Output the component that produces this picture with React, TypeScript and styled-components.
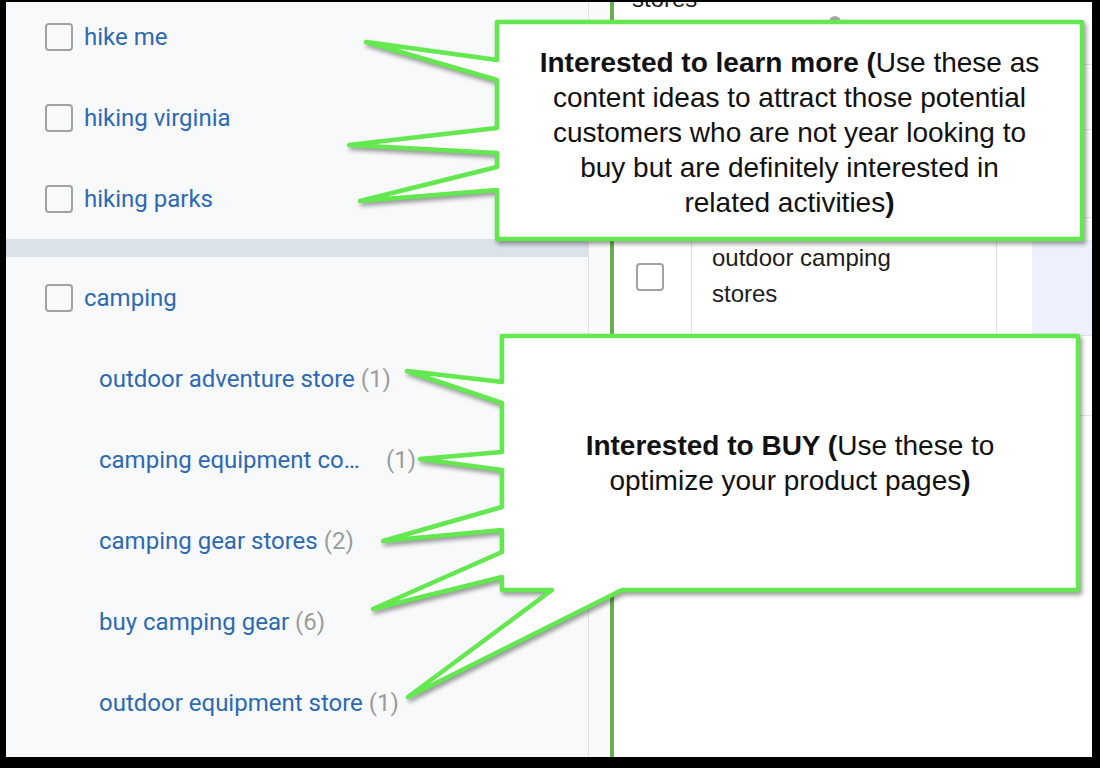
import React from "react";
import styled, { createGlobalStyle } from "styled-components";

const GlobalStyle = createGlobalStyle`
  html, body { margin: 0; padding: 0; background: #000; }
  body { width: 1100px; height: 768px; overflow: hidden; }
`;

const Frame = styled.div`
  position: relative;
  width: 1100px;
  height: 768px;
  box-sizing: border-box;
  padding: 2px 8px 11px 6px;
  background: #000;
  display: flex;
`;

const Screen = styled.div`
  flex: 1;
  display: flex;
  overflow: hidden;
  background: #fff;
`;

/* ---------- left filter panel ---------- */
const LeftPanel = styled.div`
  width: 582px;
  flex: none;
  background: #f8f9fa;
  border-right: 1px solid #dfe1e4;
  overflow: hidden;
  font-family: Roboto, "Noto Sans", sans-serif;
`;

const Group = styled.div<{ $shift?: number }>`
  margin-top: ${(p) => p.$shift ?? 0}px;
`;

const ItemRow = styled.div<{ $indent?: boolean }>`
  height: 81px;
  display: flex;
  align-items: center;
  gap: 11px;
  padding-left: ${(p) => (p.$indent ? 93 : 39)}px;
  font-size: 24px;
  color: #2c69b2;
  white-space: nowrap;
`;

const Check = styled.span`
  display: block;
  flex: none;
  width: 28px;
  height: 28px;
  box-sizing: border-box;
  border: 2px solid #a2a2a2;
  border-radius: 4px;
  background: transparent;
`;

const Name = styled.span<{ $fixed?: number }>`
  display: inline-block;
  ${(p) => (p.$fixed ? `width: ${p.$fixed}px;` : "")}
`;

const Count = styled.span`
  color: #9c9c9c;
`;

const Divider = styled.div`
  height: 18px;
  background: #dce2ea;
`;

/* ---------- right table ---------- */
const RightPane = styled.div`
  flex: 1;
  display: flex;
  background: #fff;
  font-family: "Liberation Sans", Arial, sans-serif;
  color: #1c1c1c;
`;

const Gutter = styled.div`
  width: 21px;
  flex: none;
  background: #fafafa;
`;

const Rail = styled.div`
  width: 4px;
  flex: none;
  background: #6aae52;
`;

const Table = styled.div`
  flex: 1;
  display: flex;
  flex-direction: column;
`;

const TopRow = styled.div`
  height: 238px;
  flex: none;
  display: grid;
  grid-template-columns: 418px 60px;
`;

const TopLead = styled.div`
  display: flex;
  align-items: flex-start;
  padding-left: 18px;
  font-size: 24px;
`;

const CutText = styled.span`
  margin-top: -17px;
`;

const Dot = styled.span`
  width: 12px;
  height: 12px;
  border-radius: 50%;
  background: #a5a5a5;
  margin: 14px 0 0 132px;
`;

const SideStack = styled.div`
  display: flex;
  flex-direction: column;
`;

const SideMark = styled.div<{ $h: number; $line?: boolean }>`
  height: ${(p) => p.$h}px;
  box-sizing: border-box;
  border-bottom: ${(p) => (p.$line ? "1px solid #e3e3e3" : "none")};
`;

const DataRow = styled.div<{ $h: number }>`
  height: ${(p) => p.$h}px;
  flex: none;
  display: flex;
  box-sizing: border-box;
  border-bottom: 1px solid #e3e3e3;
`;

const CheckCell = styled.div`
  width: 78px;
  box-sizing: border-box;
  border-right: 1px solid #e2e2e2;
  padding: 23px 0 0 22px;
`;

const KeywordCell = styled.div`
  width: 305px;
  box-sizing: border-box;
  border-right: 1px solid #e2e2e2;
  padding-left: 20px;
  font-size: 24px;
  line-height: 36px;
`;

const KeywordText = styled.div`
  max-width: 220px;
`;

const Cell = styled.div<{ $w: number; $tint?: boolean }>`
  width: ${(p) => p.$w}px;
  background: ${(p) => (p.$tint ? "#eef1fb" : "transparent")};
`;

/* ---------- callouts ---------- */
const Overlay = styled.svg`
  position: absolute;
  left: 0;
  top: 0;
  width: 1100px;
  height: 768px;
  pointer-events: none;
  overflow: visible;
`;

const CalloutShape = styled.polygon`
  fill: #fff;
  stroke: #63e84f;
  stroke-width: 4.5;
  stroke-linejoin: round;
  filter: drop-shadow(2px 3px 2px rgba(0, 0, 0, 0.38));
`;

const CalloutText = styled.div<{ $x: number; $y: number; $w: number; $h: number; $pad?: number }>`
  position: absolute;
  left: ${(p) => p.$x}px;
  top: ${(p) => p.$y}px;
  width: ${(p) => p.$w}px;
  height: ${(p) => p.$h}px;
  box-sizing: border-box;
  padding-top: ${(p) => p.$pad ?? 0}px;
  display: flex;
  align-items: center;
  justify-content: center;
  text-align: center;
  font-family: "Liberation Sans", Arial, sans-serif;
  font-size: 28px;
  line-height: 35px;
  color: #111;
  white-space: nowrap;
`;

const B = styled.b`
  font-weight: 700;
`;

const hiking = ["hike me", "hiking virginia", "hiking parks"];

const camping: { name: string; count: number; fixed?: number }[] = [
  { name: "outdoor adventure store", count: 1 },
  { name: "camping equipment co…", count: 1, fixed: 281 },
  { name: "camping gear stores", count: 2 },
  { name: "buy camping gear", count: 6 },
  { name: "outdoor equipment store", count: 1 },
];

const learnPts =
  "497,22 1082,22 1082,239 497,239 497,190 360,201 497,167 497,153 349,145 497,128 497,80 366,42 497,60";
const buyPts =
  "502,336 1078,336 1078,590 622,590 408,697 552,590 502,590 502,577 373,609 502,552 502,530 383,541 502,507 502,470 420,459 502,452 502,403 407,371 502,382";

export default function App() {
  return (
    <>
      <GlobalStyle />
      <Frame>
        <Screen>
          <LeftPanel>
            <Group $shift={-6}>
              {hiking.map((h) => (
                <ItemRow key={h}>
                  <Check />
                  <Name>{h}</Name>
                </ItemRow>
              ))}
            </Group>
            <Divider />
            <Group>
              <ItemRow>
                <Check />
                <Name>camping</Name>
              </ItemRow>
              {camping.map((c) => (
                <ItemRow $indent key={c.name}>
                  <span>
                    <Name $fixed={c.fixed}>{c.name}</Name> <Count>({c.count})</Count>
                  </span>
                </ItemRow>
              ))}
            </Group>
          </LeftPanel>
          <RightPane>
            <Gutter />
            <Rail />
            <Table>
              <TopRow>
                <TopLead>
                  <CutText>stores</CutText>
                  <Dot />
                </TopLead>
                <SideStack>
                  <SideMark $h={63} $line />
                  <SideMark $h={65} $line />
                  <SideMark $h={88} $line />
                  <SideMark $h={22} />
                </SideStack>
              </TopRow>
              <DataRow $h={96}>
                <CheckCell>
                  <Check />
                </CheckCell>
                <KeywordCell>
                  <KeywordText>outdoor camping stores</KeywordText>
                </KeywordCell>
                <Cell $w={35} />
                <Cell $w={60} $tint />
              </DataRow>
              <DataRow $h={80} />
            </Table>
          </RightPane>
        </Screen>

        <Overlay viewBox="0 0 1100 768">
          <CalloutShape points={learnPts} />
          <CalloutShape points={buyPts} />
        </Overlay>

        <CalloutText $x={497} $y={22} $w={585} $h={217} $pad={3}>
          <div>
            <B>Interested to learn more (</B>Use these as
            <br />
            content ideas to attract those potential
            <br />
            customers who are not year looking to
            <br />
            buy but are definitely interested in
            <br />
            related activities<B>)</B>
          </div>
        </CalloutText>

        <CalloutText $x={502} $y={336} $w={576} $h={254}>
          <div>
            <B>Interested to BUY (</B>Use these to
            <br />
            optimize your product pages<B>)</B>
          </div>
        </CalloutText>
      </Frame>
    </>
  );
}
